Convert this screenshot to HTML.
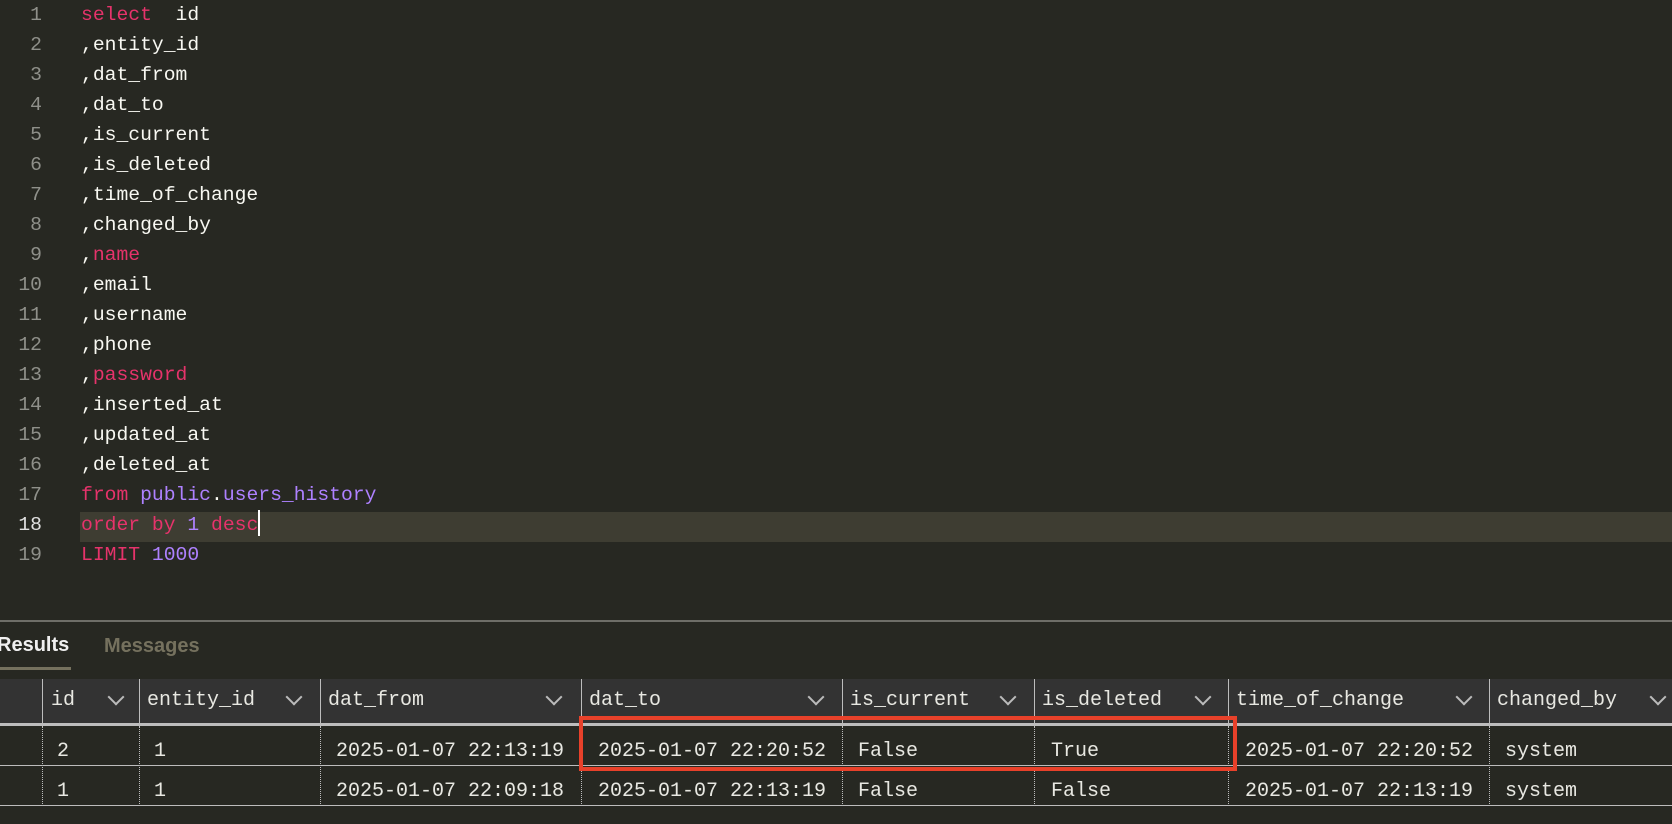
<!DOCTYPE html>
<html><head><meta charset="utf-8"><style>
html,body{margin:0;padding:0;background:#272822;width:1672px;height:824px;overflow:hidden;position:relative;font-family:"Liberation Mono","DejaVu Sans Mono",monospace;}
.ln{position:absolute;left:0;width:42px;text-align:right;color:#8f908a;font-size:19.7px;}
.cd{position:absolute;left:81px;color:#f8f8f2;font-size:19.7px;white-space:pre;}
.k{color:#e6336b}.p{color:#ae81ff}
.hl{position:absolute;left:80px;top:512px;width:1592px;height:30px;background:#3e3d32;}
.a{position:absolute;white-space:pre;font-size:20px;color:#e8e8e2;}
.hd{position:absolute;left:0;top:679px;width:1672px;height:44px;background:#333333;}
.vb{position:absolute;width:1px;background:#bdbdbd;}
.vd{position:absolute;width:0;border-left:1px dotted #bdbdbd;}
.hz{position:absolute;left:0;width:1672px;background:#bdbdbd;}
.chev{position:absolute;width:10px;height:10px;border-right:2px solid #bbb;border-bottom:2px solid #bbb;transform:rotate(45deg);}
</style></head><body>
<div class="hl"></div>
<div class="ln" style="top:4px">1</div><div class="cd" style="top:4px"><span class="k">select</span>  id</div>
<div class="ln" style="top:34px">2</div><div class="cd" style="top:34px">,entity_id</div>
<div class="ln" style="top:64px">3</div><div class="cd" style="top:64px">,dat_from</div>
<div class="ln" style="top:94px">4</div><div class="cd" style="top:94px">,dat_to</div>
<div class="ln" style="top:124px">5</div><div class="cd" style="top:124px">,is_current</div>
<div class="ln" style="top:154px">6</div><div class="cd" style="top:154px">,is_deleted</div>
<div class="ln" style="top:184px">7</div><div class="cd" style="top:184px">,time_of_change</div>
<div class="ln" style="top:214px">8</div><div class="cd" style="top:214px">,changed_by</div>
<div class="ln" style="top:244px">9</div><div class="cd" style="top:244px">,<span class="k">name</span></div>
<div class="ln" style="top:274px">10</div><div class="cd" style="top:274px">,email</div>
<div class="ln" style="top:304px">11</div><div class="cd" style="top:304px">,username</div>
<div class="ln" style="top:334px">12</div><div class="cd" style="top:334px">,phone</div>
<div class="ln" style="top:364px">13</div><div class="cd" style="top:364px">,<span class="k">password</span></div>
<div class="ln" style="top:394px">14</div><div class="cd" style="top:394px">,inserted_at</div>
<div class="ln" style="top:424px">15</div><div class="cd" style="top:424px">,updated_at</div>
<div class="ln" style="top:454px">16</div><div class="cd" style="top:454px">,deleted_at</div>
<div class="ln" style="top:484px">17</div><div class="cd" style="top:484px"><span class="k">from</span> <span class="p">public</span>.<span class="p">users_history</span></div>
<div class="ln" style="top:514px;color:#e0e0e0">18</div><div class="cd" style="top:514px"><span class="k">order by</span> <span class="p">1</span> <span class="k">desc</span><span style="display:inline-block;width:2px;height:26px;background:#fff;vertical-align:middle;margin-top:-4px"></span></div>
<div class="ln" style="top:544px">19</div><div class="cd" style="top:544px"><span class="k">LIMIT</span> <span class="p">1000</span></div>

<div class="hz" style="top:620px;height:2px;background:#6e6e68"></div>
<div style="position:absolute;left:-3px;top:634px;font-family:'Liberation Sans',sans-serif;font-weight:bold;font-size:20px;color:#f0f0f0">Results</div>
<div style="position:absolute;left:104px;top:635px;font-family:'Liberation Sans',sans-serif;font-weight:bold;font-size:20px;color:#75715e">Messages</div>
<div style="position:absolute;left:0;top:667px;width:71px;height:3px;background:#75715e"></div>

<div class="hd"></div>
<div class="hz" style="top:723px;height:3px"></div>
<div class="hz" style="top:765px;height:1px"></div>
<div class="hz" style="top:805px;height:1px"></div>

<div class="vb" style="left:42px;top:679px;height:44px"></div>
<div class="vb" style="left:139px;top:679px;height:44px"></div>
<div class="vb" style="left:320px;top:679px;height:44px"></div>
<div class="vb" style="left:581px;top:679px;height:44px"></div>
<div class="vb" style="left:842px;top:679px;height:44px"></div>
<div class="vb" style="left:1034px;top:679px;height:44px"></div>
<div class="vb" style="left:1228px;top:679px;height:44px"></div>
<div class="vb" style="left:1489px;top:679px;height:44px"></div>
<div class="vd" style="left:42px;top:726px;height:80px"></div>
<div class="vd" style="left:139px;top:726px;height:80px"></div>
<div class="vd" style="left:320px;top:726px;height:80px"></div>
<div class="vd" style="left:581px;top:726px;height:80px"></div>
<div class="vd" style="left:842px;top:726px;height:80px"></div>
<div class="vd" style="left:1034px;top:726px;height:80px"></div>
<div class="vd" style="left:1228px;top:726px;height:80px"></div>
<div class="vd" style="left:1489px;top:726px;height:80px"></div>

<div class="a" style="left:51px;top:689px">id</div>
<div class="a" style="left:147px;top:689px">entity_id</div>
<div class="a" style="left:328px;top:689px">dat_from</div>
<div class="a" style="left:589px;top:689px">dat_to</div>
<div class="a" style="left:850px;top:689px">is_current</div>
<div class="a" style="left:1042px;top:689px">is_deleted</div>
<div class="a" style="left:1236px;top:689px">time_of_change</div>
<div class="a" style="left:1497px;top:689px">changed_by</div>
<div class="chev" style="left:110px;top:691px"></div>
<div class="chev" style="left:288px;top:691px"></div>
<div class="chev" style="left:548px;top:691px"></div>
<div class="chev" style="left:810px;top:691px"></div>
<div class="chev" style="left:1002px;top:691px"></div>
<div class="chev" style="left:1197px;top:691px"></div>
<div class="chev" style="left:1458px;top:691px"></div>
<div class="chev" style="left:1652px;top:691px"></div>

<div class="a" style="left:57px;top:740px">2</div>
<div class="a" style="left:154px;top:740px">1</div>
<div class="a" style="left:336px;top:740px">2025-01-07 22:13:19</div>
<div class="a" style="left:598px;top:740px">2025-01-07 22:20:52</div>
<div class="a" style="left:858px;top:740px">False</div>
<div class="a" style="left:1051px;top:740px">True</div>
<div class="a" style="left:1245px;top:740px">2025-01-07 22:20:52</div>
<div class="a" style="left:1505px;top:740px">system</div>

<div class="a" style="left:57px;top:780px">1</div>
<div class="a" style="left:154px;top:780px">1</div>
<div class="a" style="left:336px;top:780px">2025-01-07 22:09:18</div>
<div class="a" style="left:598px;top:780px">2025-01-07 22:13:19</div>
<div class="a" style="left:858px;top:780px">False</div>
<div class="a" style="left:1051px;top:780px">False</div>
<div class="a" style="left:1245px;top:780px">2025-01-07 22:13:19</div>
<div class="a" style="left:1505px;top:780px">system</div>

<div style="position:absolute;left:579px;top:716px;width:650px;height:47px;border:4px solid #e8412a"></div>
</body></html>
